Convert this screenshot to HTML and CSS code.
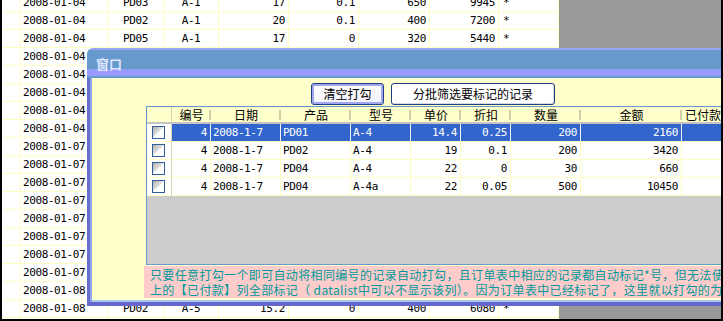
FILE: index.html
```html
<!DOCTYPE html>
<html lang="zh-CN">
<head>
    <meta charset="UTF-8">
    <title>订单打勾</title>
    <link rel="stylesheet" href="styles.css">
</head>
<body>
    <div class="screen">
        <!-- 订单表（被窗口挡住的部分只留日期） -->
        <table class="sheet">
            <colgroup>
                <col class="s-gap"><col class="s-date"><col class="s-prod"><col class="s-model"><col class="s-price">
                <col class="s-disc"><col class="s-qty"><col class="s-amt"><col class="s-mark">
            </colgroup>
            <tbody>
                <tr><td></td><td>2008-01-04</td><td class="c">PD03</td><td class="c">A-1</td><td class="r">17</td><td class="r">0.1</td><td class="r">650</td><td class="r">9945</td><td>*</td></tr>
                <tr><td></td><td>2008-01-04</td><td class="c">PD02</td><td class="c">A-1</td><td class="r">20</td><td class="r">0.1</td><td class="r">400</td><td class="r">7200</td><td>*</td></tr>
                <tr><td></td><td>2008-01-04</td><td class="c">PD05</td><td class="c">A-1</td><td class="r">17</td><td class="r">0</td><td class="r">320</td><td class="r">5440</td><td>*</td></tr>
                <tr><td></td><td>2008-01-04</td><td></td><td></td><td></td><td></td><td></td><td></td><td></td></tr>
                <tr><td></td><td>2008-01-04</td><td></td><td></td><td></td><td></td><td></td><td></td><td></td></tr>
                <tr><td></td><td>2008-01-04</td><td></td><td></td><td></td><td></td><td></td><td></td><td></td></tr>
                <tr><td></td><td>2008-01-04</td><td></td><td></td><td></td><td></td><td></td><td></td><td></td></tr>
                <tr><td></td><td>2008-01-04</td><td></td><td></td><td></td><td></td><td></td><td></td><td></td></tr>
                <tr><td></td><td>2008-01-07</td><td></td><td></td><td></td><td></td><td></td><td></td><td></td></tr>
                <tr><td></td><td>2008-01-07</td><td></td><td></td><td></td><td></td><td></td><td></td><td></td></tr>
                <tr><td></td><td>2008-01-07</td><td></td><td></td><td></td><td></td><td></td><td></td><td></td></tr>
                <tr><td></td><td>2008-01-07</td><td></td><td></td><td></td><td></td><td></td><td></td><td></td></tr>
                <tr><td></td><td>2008-01-07</td><td></td><td></td><td></td><td></td><td></td><td></td><td></td></tr>
                <tr><td></td><td>2008-01-07</td><td></td><td></td><td></td><td></td><td></td><td></td><td></td></tr>
                <tr><td></td><td>2008-01-07</td><td></td><td></td><td></td><td></td><td></td><td></td><td></td></tr>
                <tr><td></td><td>2008-01-07</td><td></td><td></td><td></td><td></td><td></td><td></td><td></td></tr>
                <tr><td></td><td>2008-01-08</td><td></td><td></td><td></td><td></td><td></td><td></td><td></td></tr>
                <tr><td></td><td>2008-01-08</td><td class="c">PD02</td><td class="c">A-5</td><td class="r">15.2</td><td class="r">0</td><td class="r">400</td><td class="r">6080</td><td>*</td></tr>
                <tr><td></td><td></td><td></td><td></td><td></td><td></td><td></td><td></td><td></td></tr>
            </tbody>
        </table>

        <!-- 弹出窗口 -->
        <div class="win">
            <div class="win-title">窗口</div>
            <div class="win-client">
                <div class="toolbar">
                    <button class="btn btn-default" type="button">清空打勾</button>
                    <button class="btn btn-wide" type="button">分批筛选要标记的记录</button>
                </div>

                <div class="grid">
                    <table>
                        <colgroup>
                            <col class="g-cb"><col class="g-num"><col class="g-date"><col class="g-prod"><col class="g-model">
                            <col class="g-price"><col class="g-disc"><col class="g-qty"><col class="g-amt"><col class="g-paid">
                        </colgroup>
                        <thead>
                            <tr><th class="cb"></th><th>编号</th><th>日期</th><th>产品</th><th>型号</th><th>单价</th><th>折扣</th><th>数量</th><th>金额</th><th>已付款</th></tr>
                        </thead>
                        <tbody>
                            <tr class="sel"><td class="cb"><span class="check"></span></td><td class="r">4</td><td>2008-1-7</td><td>PD01</td><td>A-4</td><td class="r">14.4</td><td class="r">0.25</td><td class="r">200</td><td class="r">2160</td><td></td></tr>
                            <tr><td class="cb"><span class="check"></span></td><td class="r">4</td><td>2008-1-7</td><td>PD02</td><td>A-4</td><td class="r">19</td><td class="r">0.1</td><td class="r">200</td><td class="r">3420</td><td></td></tr>
                            <tr><td class="cb"><span class="check"></span></td><td class="r">4</td><td>2008-1-7</td><td>PD04</td><td>A-4</td><td class="r">22</td><td class="r">0</td><td class="r">30</td><td class="r">660</td><td></td></tr>
                            <tr><td class="cb"><span class="check"></span></td><td class="r">4</td><td>2008-1-7</td><td>PD04</td><td>A-4a</td><td class="r">22</td><td class="r">0.05</td><td class="r">500</td><td class="r">10450</td><td></td></tr>
                        </tbody>
                    </table>
                </div>

                <p class="note"> 只要任意打勾一个即可自动将相同编号的记录自动打勾，且订单表中相应的记录都自动标记*号，但无法使订单表<br>上的【已付款】列全部标记（ datalist中可以不显示该列）。因为订单表中已经标记了，这里就以打勾的为准。</p>
            </div>
        </div>
    </div>
</body>
</html>
```

FILE: styles.css
```css
* {
    box-sizing: border-box;
}

body {
    margin: 0;
    font-family: "Noto Sans CJK SC", sans-serif;
    font-size: 12px;
    color: #000;
}

.screen {
    width: 723px;
    height: 321px;
    position: relative;
    overflow: hidden;
    background: #999;
    border: 2px solid #000;
    border-top: 0;
}

/* 背景里的订单表 */
.sheet {
    table-layout: fixed;
    border-collapse: separate;
    border-spacing: 0;
    width: 557px;
    margin-top: -6px;
    background: #fff;
    font: 11px "DejaVu Sans Mono", monospace;
    letter-spacing: -0.4px;
}

.sheet td {
    height: 18px;
    padding: 0 3px 0 2px;
    line-height: 17px;
    border-right: 1px solid #ffffc4;
    border-bottom: 1px solid #ffffc4;
    white-space: nowrap;
    overflow: hidden;
}

.sheet td:last-child {
    padding-left: 4px;
}

.s-gap { width: 19px; }
.s-date { width: 87px; }
.s-prod { width: 57px; }
.s-model { width: 54px; }
.s-price { width: 70px; }
.s-disc { width: 70px; }
.s-qty { width: 71px; }
.s-amt { width: 69px; }
.s-mark { width: 60px; }

.c { text-align: center; }
.r { text-align: right; }

/* 窗口 */
.win {
    position: absolute;
    left: 85px;
    top: 48px;
    width: 700px;
    height: 258px;
    display: flex;
    flex-direction: column;
    border-radius: 6px 0 0 0;
    overflow: hidden;
}

.win-title {
    flex: none;
    height: 30px;
    padding: 9px 0 0 9px;
    font-size: 13px;
    font-weight: bold;
    line-height: 13px;
    color: #dfe3ff;
    background: linear-gradient(#9aa4f4 0 2px, #6699cc 2px 21px, #8aa2ea 21px 22px, #9999ff 22px 28px, #6699cc 28px);
}

.win-client {
    flex: 1;
    background: #ffffcc;
    border-left: 3px solid #6670cc;
    border-bottom: 4px solid #6666cc;
    box-shadow: inset 2px 0 0 #93a3ee, inset 0 -2px 0 #a8c8f0;
    padding-top: 5px;
}

.toolbar {
    display: flex;
    gap: 7px;
    height: 22px;
    padding-left: 221px;
}

.btn {
    height: 22px;
    padding: 0;
    font: 12px "Noto Sans CJK SC", sans-serif;
    line-height: 20px;
    color: #000;
    background: #fff;
    border: 1px solid #1f3f80;
    border-radius: 3px;
}

.btn-default {
    width: 73px;
    background: linear-gradient(#fff, #f0f0fa);
    box-shadow: inset 0 0 0 2px #a2a6f2;
}

.btn-wide {
    width: 164px;
    box-shadow: inset -1px -1px 0 #d8d8e0;
}

/* 打勾列表 */
.grid {
    margin: 1px 0 0 56px;
    height: 159px;
    background: #ccc;
    border: 1px solid #6699cc;
    border-right: 0;
    overflow: hidden;
}

.grid table {
    table-layout: fixed;
    border-spacing: 0;
    width: 577px;
}

.g-cb { width: 25px; }
.g-num { width: 39px; }
.g-date { width: 70px; }
.g-prod { width: 70px; }
.g-model { width: 60px; }
.g-price { width: 50px; }
.g-disc { width: 50px; }
.g-qty { width: 70px; }
.g-amt { width: 101px; }
.g-paid { width: 42px; }

.grid th {
    height: 17px;
    padding: 0;
    font-weight: normal;
    font-size: 12px;
    line-height: 15px;
    white-space: nowrap;
    border-bottom: 2px solid #c4c4c4;
    background: linear-gradient(#d2cfa8, #d2cfa8) right center / 2px 10px no-repeat, #ffffcc;
}

.grid th.cb {
    background: #ffffcc;
    border-right: 1px solid #d4d2b0;
}

.grid td {
    height: 18px;
    padding: 0 3px 0 2px;
    font: 11px "DejaVu Sans Mono", monospace;
    line-height: 17px;
    letter-spacing: -0.4px;
    white-space: nowrap;
    background: #fff;
    border-right: 1px solid #ffffc4;
    border-bottom: 1px solid #ffffc4;
}

.grid td.cb {
    padding: 0 0 0 5px;
    border-right-color: #d4d2b0;
}

.grid tr.sel td {
    background: #3366cc;
    color: #fff;
    border-right-color: #f4f4f8;
}

.grid tr.sel td.cb {
    background: #fff;
    border-right-color: #d4d2b0;
}

.check {
    display: block;
    width: 13px;
    height: 13px;
    border: 1px solid #335f99;
    background: linear-gradient(135deg, #b0b0b0, #e4e4e4 50%, #fff 50%);
}

.note {
    margin: 1px 0 0 54px;
    height: 32px;
    padding: 1px 0 0 6px;
    background: #ffcccc;
    color: #009999;
    line-height: 15px;
    letter-spacing: 0.35px;
    white-space: nowrap;
    overflow: hidden;
}
```
